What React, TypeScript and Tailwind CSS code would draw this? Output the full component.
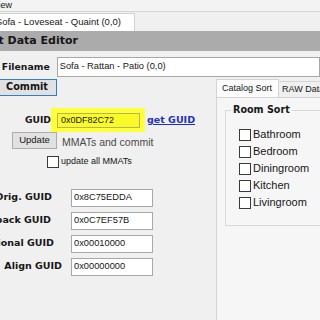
const guidRows = [
  { label: "Orig. GUID", value: "0x8C75EDDA", pad: "pr-[19px]" },
  { label: "Fallback GUID", value: "0x0C7EF57B", pad: "pr-[20px]" },
  { label: "Optional GUID", value: "0x00010000", pad: "pr-[17px]" },
  { label: "Align GUID", value: "0x00000000", pad: "pr-[9px]" },
];

const rooms = ["Bathroom", "Bedroom", "Diningroom", "Kitchen", "Livingroom"];

// bold labels read wide like Tahoma bold, so they get DejaVu
const bold = "font-['DejaVu_Sans',Verdana,sans-serif] font-bold";

function Box() {
  return <span className="w-[12px] h-[12px] shrink-0 border border-[#3a3a3a] bg-white" />;
}

export default function App() {
  return (
    <div className="w-[320px] h-[320px] overflow-hidden bg-[#f0f0f0] text-[#161616] font-['Liberation_Sans',Arial,sans-serif]">
      {/* menu */}
      <div className="h-[12px] flex border-b border-[#d6d6d6] bg-[#f3f3f3]">
        <div className="w-[12px] flex justify-end whitespace-nowrap text-[9px] leading-[11px]">View</div>
      </div>

      {/* document tabs */}
      <div className="h-[19px] flex items-end">
        <div className="w-[135px] h-[18px] flex items-center justify-end pr-[13px] whitespace-nowrap bg-white border-t border-r border-[#d2d2d2] text-[9.5px]">
          Sofa - Loveseat - Quaint (0,0)
        </div>
      </div>

      {/* title */}
      <div className="h-[20px] flex items-center bg-[#ababab]">
        <div className={`w-[78px] flex justify-end whitespace-nowrap text-[11px] ${bold}`}>Object Data Editor</div>
      </div>

      {/* filename */}
      <div className="mt-[6px] h-[20px] flex items-center">
        <div className={`w-[51px] flex justify-end whitespace-nowrap text-[9.3px] ${bold}`}>Filename</div>
        <div className="ml-[7px] w-[270px] h-[20px] flex items-center pl-[2px] bg-white border border-[#a8a8a8] text-[9.3px] whitespace-nowrap">
          Sofa - Rattan - Patio (0,0)
        </div>
      </div>

      <div className="mt-[2px] flex">
        {/* left column */}
        <div className="w-[216px] shrink-0 flex flex-col">
          <div className={`ml-[-3px] w-[60px] h-[17px] flex items-center justify-center bg-[#e1e1e1] border border-[#2f7fc8] text-[9.7px] ${bold}`}>
            Commit
          </div>

          <div className="mt-[12px] flex items-center">
            <div className={`w-[51px] flex justify-end text-[9.2px] ${bold}`}>GUID</div>
            <div className="w-[94px] h-[24px] pt-[5px] pl-[6px] pr-[5px] bg-[#ffff3a]">
              <div className="h-[15px] flex items-center pl-[3px] border border-[#b4b45a] bg-[#fafa2a] text-[9px]">0x0DF82C72</div>
            </div>
            <a className={`ml-[2px] text-[9.5px] text-[#1d2fc0] underline ${bold}`}>get GUID</a>
          </div>

          <div className="flex items-start">
            <div className="ml-[12px] w-[45px] h-[17px] flex items-center justify-center bg-[#e1e1e1] border border-[#adadad] text-[9.5px]">
              Update
            </div>
            <div className="ml-[5px] mt-[4px] text-[10.5px] leading-[13px] text-[#4a4a4a] whitespace-nowrap">MMATs and commit</div>
          </div>

          <div className="mt-[6px] ml-[47px] flex items-center">
            <Box />
            <span className="ml-[2px] text-[9px] whitespace-nowrap">update all MMATs</span>
          </div>

          <div className="mt-[20px] flex flex-col gap-[5px]">
            {guidRows.map((r) => (
              <div key={r.label} className="h-[18px] flex items-center">
                <div className={`w-[71px] flex justify-end whitespace-nowrap text-[9.5px] ${bold} ${r.pad}`}>{r.label}</div>
                <div className="w-[82px] h-[18px] flex items-center pl-[2px] bg-white border border-[#a8a8a8] text-[9.3px]">
                  {r.value}
                </div>
              </div>
            ))}
          </div>
        </div>

        {/* right tab panel */}
        <div className="flex-1 flex flex-col">
          <div className="h-[18px] flex items-end">
            <div className="w-[63px] h-[18px] flex items-center pl-[5px] bg-[#fcfcfc] border-t border-l border-r border-[#d4d4d4] text-[9px] whitespace-nowrap">
              Catalog Sort
            </div>
            <div className="w-[60px] h-[16px] flex items-center pl-[3px] border-t border-r border-[#d4d4d4] text-[9px] whitespace-nowrap">
              RAW Data
            </div>
          </div>
          <div className="h-[230px] pl-[8px] pt-[12px] bg-[#f6f6f6] border-l border-t border-[#d4d4d4]">
            <div className="relative w-[110px] h-[116px] pl-[13px] pt-[15px] border border-[#d8d8d8]">
              <span className={`absolute top-[-8px] left-[5px] px-[2px] bg-[#f6f6f6] text-[9.6px] leading-[14px] ${bold}`}>Room Sort</span>
              {rooms.map((r) => (
                <div key={r} className="h-[17px] flex items-center">
                  <Box />
                  <span className="ml-[2px] text-[11px]">{r}</span>
                </div>
              ))}
            </div>
          </div>
        </div>
      </div>
    </div>
  );
}
